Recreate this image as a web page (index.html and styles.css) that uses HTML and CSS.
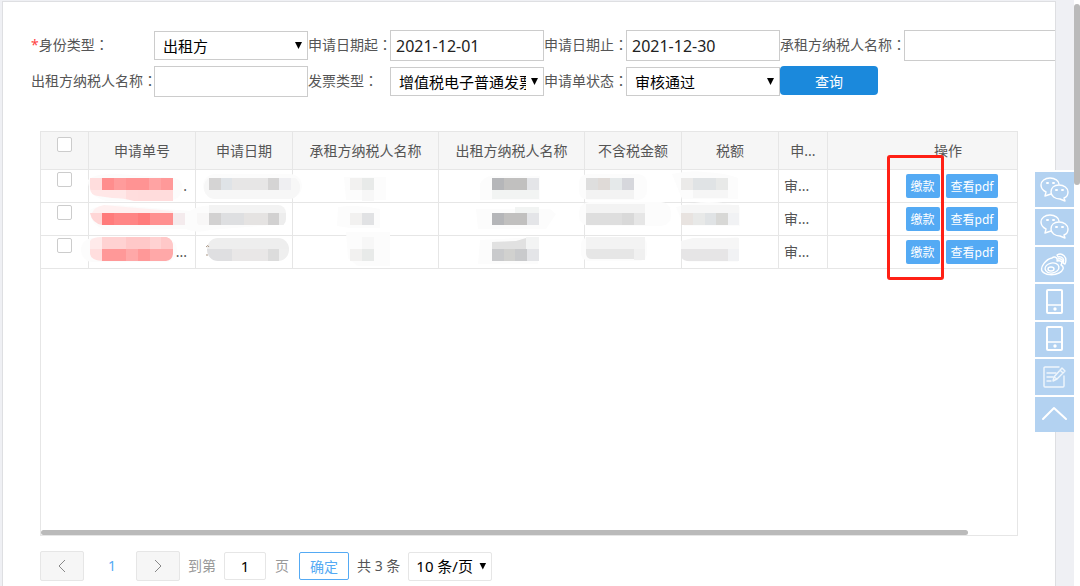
FILE: index.html
```html
<!DOCTYPE html>
<html lang="zh-CN">
<head>
<meta charset="utf-8">
<meta name="viewport" content="width=device-width, initial-scale=1">
<title>申请单查询</title>
<link rel="stylesheet" href="styles.css">
</head>
<body>
<main class="panel">
  <form class="filters">
    <label for="identity"><span class="required">*</span>身份类型<span class="colon" lang="zh-TW">：</span></label>
    <div class="select"><select id="identity"><option>出租方</option></select></div>
    <label for="from">申请日期起<span class="colon" lang="zh-TW">：</span></label>
    <input id="from" type="text" value="2021-12-01">
    <label for="to">申请日期止<span class="colon" lang="zh-TW">：</span></label>
    <input id="to" type="text" value="2021-12-30">
    <label for="lessee">承租方纳税人名称<span class="colon" lang="zh-TW">：</span></label>
    <input id="lessee" type="text">
    <label for="lessor">出租方纳税人名称<span class="colon" lang="zh-TW">：</span></label>
    <input id="lessor" type="text">
    <label for="invoice">发票类型<span class="colon" lang="zh-TW">：</span></label>
    <div class="select"><select id="invoice"><option>增值税电子普通发票</option></select></div>
    <label for="status">申请单状态<span class="colon" lang="zh-TW">：</span></label>
    <div class="select"><select id="status"><option>审核通过</option></select></div>
    <button class="query" type="button">查询</button>
  </form>

  <section class="grid">
    <table>
      <colgroup><col class="c-check"><col class="c-no"><col class="c-date"><col class="c-name"><col class="c-name"><col class="c-money"><col class="c-money"><col class="c-state"><col class="c-action"></colgroup>
      <thead>
        <tr><th class="check"><input type="checkbox" aria-label="全选"></th><th>申请单号</th><th>申请日期</th><th>承租方纳税人名称</th><th>出租方纳税人名称</th><th>不含税金额</th><th>税额</th><th>申...</th><th>操作</th></tr>
      </thead>
      <tbody>
        <tr><td class="check"><input type="checkbox" aria-label="选择第1行"></td><td class="number">.</td><td></td><td></td><td></td><td></td><td></td><td>审...</td><td class="actions"><button type="button">缴款</button><button type="button">查看pdf</button></td></tr>
        <tr><td class="check"><input type="checkbox" aria-label="选择第2行"></td><td class="number"></td><td></td><td></td><td></td><td></td><td></td><td>审...</td><td class="actions"><button type="button">缴款</button><button type="button">查看pdf</button></td></tr>
        <tr><td class="check"><input type="checkbox" aria-label="选择第3行"></td><td class="number">...</td><td></td><td></td><td></td><td></td><td></td><td>审...</td><td class="actions"><button type="button">缴款</button><button type="button">查看pdf</button></td></tr>
      </tbody>
    </table>

    <svg class="mosaic" viewBox="41 132 740 140" width="740" height="140" aria-hidden="true">
      <defs>
        <clipPath id="no1"><path d="M90 178H173V201H134Q124 198 112 198L98 196Q90 195 90 188Z"/></clipPath>
        <clipPath id="no3"><path d="M90 241Q92 237 102 237H166Q174 239 173 250Q174 260 166 261H102Q90 260 90 253Z"/></clipPath>
        <clipPath id="d1"><rect x="204" y="176" width="96" height="23" rx="11"/></clipPath>
        <clipPath id="d2"><rect x="196" y="205" width="90" height="22" rx="8"/></clipPath>
        <clipPath id="d3"><rect x="207" y="238" width="82" height="23" rx="11"/></clipPath>
      </defs>
      <g fill="#fcfcfc">
        <path d="M88 180Q94 173 118 174L174 178Q184 180 182 190Q180 200 168 201H106Q88 196 88 180Z"/>
        <path d="M90 210Q100 203 130 206L190 211Q200 204 220 206H280Q288 212 284 224L210 230Q196 234 186 229L106 230Q90 226 90 210Z"/>
        <rect x="81" y="238" width="96" height="24" rx="12"/>
        <rect x="203" y="174" width="99" height="24" rx="12"/>
        <path d="M344 177H386V200H346ZM338 207Q360 204 380 209V228H350L337 226ZM346 232H390V266H358L348 258Z"/>
        <path d="M480 184Q484 176 492 176H540V200H480ZM476 209H550L556 214L546 229H478ZM480 240L538 237V264H478Z"/>
        <rect x="579" y="174" width="68" height="26" rx="9"/><rect x="579" y="202" width="92" height="24" rx="10"/><rect x="581" y="237" width="66" height="24" rx="8"/>
        <path d="M672 174Q690 170 704 172Q726 173 738 178V199H682ZM676 207Q710 197 740 207V226H684ZM681 241L738 237V262H690Q681 260 681 250Z"/>
      </g>
      <g clip-path="url(#no1)">
        <path fill="#ffdddd" d="M90 178h12v12h-12zM126 190h24v12h-24z"/><path fill="#ff8d8d" d="M102 178h12v12h-12z"/><path fill="#ff9b9b" d="M114 178h12v12h-12z"/><path fill="#ff9393" d="M126 178h23v12h-23z"/><path fill="#ffa3a3" d="M149 178h12v12h-12z"/><path fill="#ff9999" d="M161 178h12v12h-12z"/><path fill="#ffe7e7" d="M90 190h36v12h-36z"/><path fill="#ffdcdc" d="M138 190h35v12h-35z"/>
      </g>
      <path fill="#fff0f0" d="M92 213Q94 207 104 205L126 207L173 211V213Z"/>
      <path fill="#ffd6d6" d="M90 213h12v12q-10 -2 -12 -12z"/><path fill="#ff7b7b" d="M102 213h12v12h-12zM138 213h12v12h-12z"/><path fill="#ff8585" d="M114 213h24v12h-24z"/><path fill="#ff9090" d="M150 213h23v12h-23z"/><path fill="#f4ebed" d="M173 213h12v12h-12z"/>
      <g clip-path="url(#no3)">
        <path fill="#ffeaea" d="M90 237h12v12h-12z"/><path fill="#ffd2d2" d="M102 237h71v12h-71z"/><path fill="#ffc8c8" d="M126 237h24v12h-24zM161 237h12v12h-12z"/><path fill="#ffdede" d="M90 249h12v12h-12z"/><path fill="#ff9898" d="M102 249h24v12h-24zM138 249h12v12h-12z"/><path fill="#ffa8a8" d="M126 249h12v12h-12zM150 249h23v12h-23z"/>
      </g>
      <g clip-path="url(#d1)">
        <path fill="#f7f7f7" d="M197 178h104v24h-104z"/><path fill="#d5d4d4" d="M209 178h12v12h-12zM268 178h11v12h-11z"/><path fill="#dfe3e7" d="M221 178h11v12h-11z"/><path fill="#e7e6e6" d="M232 178h36v12h-36z"/><path fill="#efeff2" d="M279 178h12v12h-12z"/>
      </g>
      <g clip-path="url(#d2)">
        <path fill="#f3f3f3" d="M209 205h78v8h-78z"/><path fill="#f8f7f7" d="M197 213h12v12h-12z"/><path fill="#d2d1d1" d="M209 213h12v12h-12zM268 213h11v12h-11z"/><path fill="#dedfe1" d="M221 213h23v12h-23z"/><path fill="#e5e3e2" d="M244 213h24v12h-24z"/><path fill="#ededed" d="M279 213h8v12h-8z"/>
      </g>
      <g clip-path="url(#d3)">
        <path fill="#eeeeee" d="M207 237h82v12h-82z"/><path fill="#dfdfe1" d="M207 249h25v12h-25z"/><path fill="#e9e7e7" d="M232 249h36v12h-36z"/><path fill="#dcdcdc" d="M268 249h11v12h-11z"/><path fill="#efefef" d="M279 249h10v12h-10z"/>
      </g>
      <path d="M206 247q2 -3 3 0M206 255h2" stroke="#a99582" fill="none"/>
      <path fill="#f2f1f0" d="M350 178h12v12h-12zM350 213h12v12h-12zM350 249h12v12h-12z"/><path fill="#e8eae9" d="M362 178h12v12h-12zM362 249h12v12h-12z"/><path fill="#f7f7f7" d="M362 190h12v11h-12zM362 237h12v12h-12z"/><path fill="#e1e2e4" d="M362 213h12v12h-12z"/>
      <path fill="#b5b6b9" d="M492 178h12v12h-12zM492 213h12v12h-12z"/><path fill="#c1c0bf" d="M504 178h23v12h-23zM504 213h23v12h-23z"/><path fill="#e4e5e8" d="M527 178h12v12h-12zM527 213h12v12h-12zM527 249h12v12h-12z"/><path fill="#f2f4f3" d="M492 190h47v9h-47zM515 207h24v6h-24z"/><path fill="#e1e1e1" d="M492 242L516 241L526 238V249H492Z"/><path fill="#f3f4f4" d="M526 237h13v12h-13z"/><path fill="#c9cacc" d="M492 249h12v12h-12zM515 249h12v12h-12z"/><path fill="#d1d1cf" d="M504 249h11v12h-11z"/>
      <path fill="#dedede" d="M586 178h12v12h-12zM586 213h36v12h-36z"/><path fill="#dfdad7" d="M598 178h12v12h-12z"/><path fill="#e5e9ea" d="M610 178h12v12h-12z"/><path fill="#d6d7dc" d="M622 178h12v12h-12z"/><path fill="#d9d9d9" d="M622 213h12v12h-12z"/><path fill="#f3f3f3" d="M586 190h48v9h-48zM586 204h59v9h-59zM586 237h59v12h-59z"/><path fill="#e6e6e6" d="M634 213h11v12h-11zM586 249h48v10h-42q-6 0 -6 -6z"/><path fill="#f0f0f0" d="M634 249h11v11h-11z"/>
      <path fill="#ebeae9" d="M681 178h12v12h-12z"/><path fill="#e0e3e5" d="M693 178h23v12h-23zM705 213h11v12h-11z"/><path fill="#e8e9e8" d="M716 178h12v12h-12zM693 213h12v12h-12z"/><path fill="#f6f6f6" d="M693 190h35v8h-35zM681 205h58v8h-58zM681 241l12 -3h46v11h-58z"/><path fill="#e8e3e0" d="M681 213h12v12h-12z"/><path fill="#d8d8d6" d="M716 213h12v12h-12z"/><path fill="#f1f2f4" d="M728 213h11v12h-11zM728 249h11v12h-11z"/><path fill="#e6e5e6" d="M681 249h47v12h-41q-6 -1 -6 -6z"/>
    </svg>
    <div class="highlight"></div>
    <div class="scroll-x"></div>
  </section>

  <nav class="pager" aria-label="分页">
    <button class="step" type="button" aria-label="上一页"><svg viewBox="0 0 8 14" width="8" height="14"><path d="M7 1L1 7L7 13"/></svg></button>
    <a class="current" href="#">1</a>
    <button class="step" type="button" aria-label="下一页"><svg viewBox="0 0 8 14" width="8" height="14"><path d="M1 1L7 7L1 13"/></svg></button>
    <label class="goto" for="page">到第</label>
    <input id="page" type="text" value="1">
    <span class="unit">页</span>
    <button class="confirm" type="button">确定</button>
    <span class="total">共 3 条</span>
    <div class="select size"><select aria-label="每页条数"><option>10 条/页</option></select></div>
  </nav>
</main>

<svg class="symbols" aria-hidden="true">
  <symbol id="wechat" viewBox="0 0 30 26">
    <path d="M11 17L5 19L6 15C2 13 1 10 1 8C1 4 5 1 10 1C15 1 19 4 19 7"/>
    <path d="M19 8C14 8 11 11 11 15C11 19 15 22 20 22L25 24L24 21C27 20 28 17 28 15C28 11 24 8 19 8Z"/>
    <path d="M7 6h1M13 6h1M16 13h1M22 13h1" stroke-width="2"/>
  </symbol>
  <symbol id="weibo" viewBox="0 0 30 26">
    <path d="M12 6C14 4 18 5 17 9C21 8 23 10 21 13C25 15 23 19 19 21C13 24 5 23 2 19C0 15 6 7 12 6Z"/>
    <ellipse cx="12" cy="16" rx="7" ry="5" transform="rotate(-10 12 16)"/>
    <ellipse cx="11" cy="17" rx="3" ry="2"/>
    <path d="M17 3C22 0 28 5 25 12L23 11C25 7 22 4 18 5ZM18 7C21 6 23 8 22 10"/>
  </symbol>
  <symbol id="phone" viewBox="0 0 30 26">
    <rect x="7" y="1" width="15" height="23" rx="1" stroke-width="2"/><path d="M7 16H22"/><circle cx="15" cy="20" r="1" fill="#fff"/>
  </symbol>
  <symbol id="note" viewBox="0 0 30 26">
    <path d="M19 3H5Q4 3 4 4V22Q4 23 5 23H23Q24 23 24 22V12M7 9H16M7 13H13M7 17H11"/><path d="M13 17L14 13L22 4L25 7L17 15ZM20 6L23 9M14 13L17 15"/>
  </symbol>
  <symbol id="top" viewBox="0 0 30 26"><path d="M3 18L14 7L26 18" stroke-width="2"/></symbol>
</svg>
<aside class="rail">
  <a href="#" aria-label="微信公众号"><svg><use href="#wechat"/></svg></a>
  <a href="#" aria-label="微信服务号"><svg><use href="#wechat"/></svg></a>
  <a href="#" aria-label="微博"><svg><use href="#weibo"/></svg></a>
  <a href="#" aria-label="手机应用"><svg><use href="#phone"/></svg></a>
  <a href="#" aria-label="手机客户端"><svg><use href="#phone"/></svg></a>
  <a href="#" aria-label="意见反馈"><svg class="soft"><use href="#note"/></svg></a>
  <a href="#" aria-label="返回顶部"><svg><use href="#top"/></svg></a>
</aside>
<div class="scroll-y"></div>
</body>
</html>
```

FILE: styles.css
```css
* { box-sizing: border-box; }

body {
  display: flex;
  min-height: 100vh;
  margin: 0;
  padding: 1px 24px 0 2px;
  overflow-x: hidden;
  background: #eff0f4;
  color: #555;
  font: 14px/20px "Noto Sans", "Noto Sans CJK SC", sans-serif;
}

input, select, button { margin: 0; font-family: inherit; }
button { cursor: pointer; }
a { text-decoration: none; }

.panel {
  flex: 1;
  min-width: 0;
  padding-top: 26px;
  overflow: hidden;
  background: #fff;
  border: 1px solid #dedfe2;
  border-bottom: 0;
}

/* Filters */
.filters {
  display: grid;
  grid-template-columns: 123px 154px 82px 154px 82px 154px 124px 154px;
  grid-auto-rows: 35px;
  row-gap: 1px;
  align-items: center;
  padding-left: 28px;
}
.filters label { padding-bottom: 2px; white-space: nowrap; }
.colon { font-family: "Noto Sans CJK TC", sans-serif; }
.required { color: #f44; }
.filters > input {
  width: 100%;
  height: 31px;
  padding: 0 5px;
  border: 1px solid #ccc;
  background: #fff;
  color: #222;
  font-size: 16px;
}
.select { position: relative; }
.select::after {
  content: "";
  position: absolute;
  top: 11px;
  right: 6px;
  width: 7px;
  height: 7px;
  background: #000;
  clip-path: polygon(0 0, 100% 0, 50% 100%);
  pointer-events: none;
}
.select select {
  display: block;
  width: 100%;
  height: 29px;
  padding: 0 17px 0 8px;
  appearance: none;
  border: 1px solid #ccc;
  border-radius: 0;
  background: #fff;
  color: #000;
  font-size: 15px;
}
.query {
  width: 98px;
  height: 29px;
  align-self: start;
  margin-top: 2px;
  padding: 0;
  border: 0;
  border-radius: 4px;
  background: #1b89dc;
  color: #fff;
  font-size: 14px;
}

/* Result table */
.grid {
  position: relative;
  min-height: 405px;
  margin: 32px 37px 0;
  overflow: hidden;
  border: 1px solid #e6e6e6;
}
table {
  width: 1028px;
  table-layout: fixed;
  border-collapse: separate;
  border-spacing: 0;
}
.c-check { width: 48px; }
.c-no { width: 107px; }
.c-date { width: 97px; }
.c-name { width: 146px; }
.c-money { width: 97px; }
.c-state { width: 49px; }
.c-action { width: 241px; }
th, td {
  height: 33px;
  padding: 0 5px;
  border-right: 1px solid #e6e6e6;
  border-bottom: 1px solid #e6e6e6;
  line-height: 20px;
  white-space: nowrap;
}
th {
  height: 38px;
  background: #f6f6f6;
  font-weight: 400;
  text-align: center;
}
.check { padding: 2px 0 0; text-align: center; vertical-align: top; }
th.check { padding-top: 5px; }
.check input {
  display: block;
  width: 15px;
  height: 15px;
  margin: 0 auto;
  appearance: none;
  border: 1px solid #ccc;
  border-radius: 2px;
  background: #fff;
}
.number { padding-right: 8px; text-align: right; }
.actions { padding: 0 0 0 8px; text-align: center; }
.actions button {
  height: 24px;
  padding: 0 5px;
  border: 0;
  border-radius: 2px;
  background: #54aaf4;
  color: #fff;
  font-size: 12px;
  vertical-align: middle;
}
.actions button + button { margin-left: 6px; }
.mosaic { position: absolute; top: 0; left: 0; }
.highlight {
  position: absolute;
  top: 23px;
  left: 846px;
  width: 57px;
  height: 125px;
  border: 3px solid #ff2015;
  border-radius: 3px;
}
.scroll-x {
  position: absolute;
  bottom: 0;
  left: 0;
  width: 95%;
  height: 5px;
  border-radius: 3px;
  background: #bababa;
}

/* Pagination */
.pager {
  display: flex;
  align-items: center;
  height: 30px;
  margin: 15px 37px 4px;
}
.step {
  display: grid;
  place-items: center;
  width: 44px;
  height: 30px;
  padding: 0;
  border: 1px solid #e6e6e6;
  border-radius: 2px;
  background: #f6f6f6;
}
.step svg { fill: none; stroke: #888; stroke-width: 1; }
.current { width: 52px; padding-left: 4px; color: #54aaf4; text-align: center; }
.goto { margin-left: 8px; color: #999; }
.pager input {
  width: 42px;
  height: 28px;
  margin-left: 8px;
  padding: 0;
  border: 1px solid #e6e6e6;
  border-radius: 2px;
  color: #000;
  font-size: 15px;
  text-align: center;
}
.unit { margin: 0 10px 0 9px; color: #999; }
.confirm {
  width: 50px;
  height: 28px;
  padding: 0;
  border: 1px solid #54aaf4;
  border-radius: 2px;
  background: #fff;
  color: #54aaf4;
  font-size: 14px;
}
.total { margin: 0 8px; }
.size { width: 84px; }
.size select { border-color: #e6e6e6; border-radius: 2px; padding-left: 7px; }

/* Side rail */
.symbols { position: absolute; width: 0; height: 0; }
.rail {
  position: fixed;
  top: 170px;
  right: 6px;
  display: grid;
  grid-template-rows: repeat(7, 1fr);
  gap: 2px;
  width: 40px;
  height: 262px;
  padding: 2px 0 0 1px;
  background: #fff;
}
.rail a { display: grid; place-items: center; background: #b3d2f1; }
.rail svg {
  width: 30px;
  height: 26px;
  fill: none;
  stroke: #fff;
  stroke-width: 1.4;
  stroke-linecap: round;
  stroke-linejoin: round;
}
.rail .soft { opacity: .8; }
.scroll-y {
  position: fixed;
  top: 0;
  right: 0;
  bottom: 0;
  width: 6px;
  background: #fff;
}
.scroll-y::before {
  content: "";
  display: block;
  height: 181px;
  margin-top: 4px;
  border-radius: 3px;
  background: #bababa;
}
```
